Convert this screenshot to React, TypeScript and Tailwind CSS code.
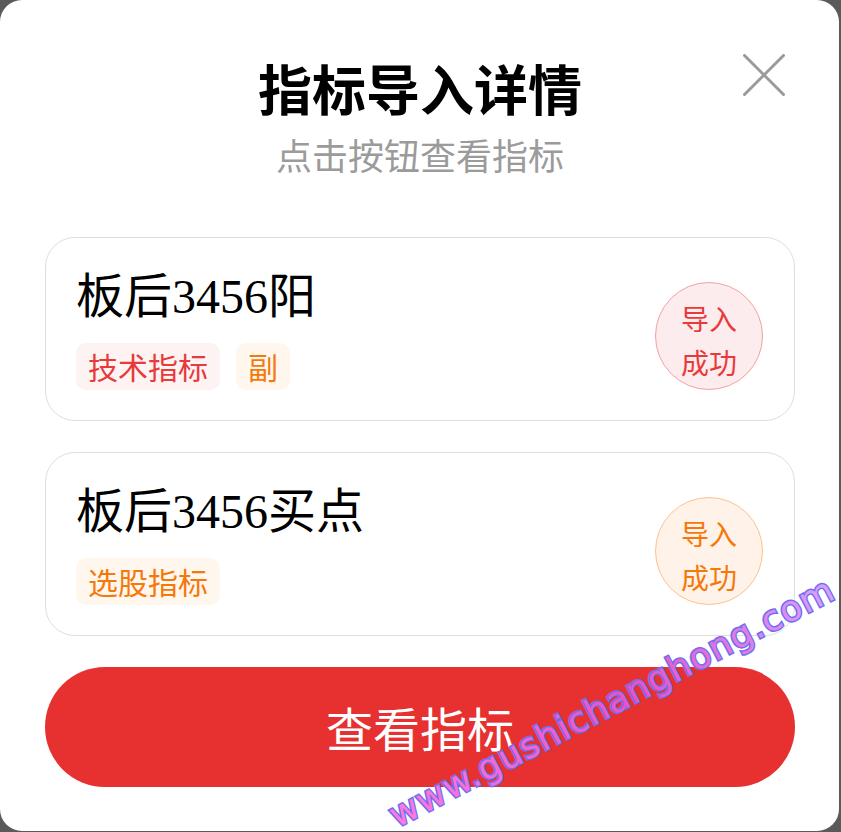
import React from "react";

type Tone = "red" | "orange";

interface Indicator {
  name: string;
  tags: { label: string; tone: Tone }[];
  tone: Tone;
}

const indicators: Indicator[] = [
  {
    name: "板后3456阳",
    tags: [
      { label: "技术指标", tone: "red" },
      { label: "副", tone: "orange" },
    ],
    tone: "red",
  },
  {
    name: "板后3456买点",
    tags: [{ label: "选股指标", tone: "orange" }],
    tone: "orange",
  },
];

const tagStyles: Record<Tone, string> = {
  red: "bg-[#fdf3f3] text-[#e8393b]",
  orange: "bg-[#fff6ee] text-[#f5780a]",
};

const badgeStyles: Record<Tone, string> = {
  red: "bg-[#fdeced] border-[#f3a0a2] text-[#e8393b]",
  orange: "bg-[#fff2e8] border-[#fcc28f] text-[#f5780a]",
};

function IndicatorCard({ item }: { item: Indicator }) {
  return (
    <div className="flex items-end justify-between rounded-[30px] border border-[#dedede] bg-white pl-[30px] pr-[31px] pt-[35px] pb-[30px]">
      <div className="flex flex-col">
        <div className="text-[48px] leading-[48px] text-black [font-family:'Liberation_Serif','Noto_Sans_CJK_SC',serif]">
          {item.name}
        </div>
        <div className="mt-[22px] flex gap-4">
          {item.tags.map((t) => (
            <span
              key={t.label}
              className={`flex h-[47px] items-center rounded-[10px] px-[12px] text-[30px] ${tagStyles[t.tone]}`}
            >
              {t.label}
            </span>
          ))}
        </div>
      </div>
      <div
        className={`flex h-[108px] w-[108px] flex-col items-center justify-center rounded-full border pt-[8px] text-[28px] leading-[44px] ${badgeStyles[item.tone]}`}
      >
        <span>导入</span>
        <span>成功</span>
      </div>
    </div>
  );
}

export default function App() {
  return (
    <div className="h-[832px] w-[841px] overflow-hidden bg-[#5a5a5a] [font-family:'Noto_Sans_CJK_SC','Noto_Sans',sans-serif]">
      <div className="relative h-[831px] w-[839px] overflow-hidden rounded-[22px] bg-white pl-[45px] pr-[44px]">
        {/* close button */}
        <button className="absolute left-[743px] top-[54px] h-[42px] w-[42px]" aria-label="关闭">
          <svg viewBox="0 0 42 42" className="h-full w-full" fill="none" stroke="#9a9a9a" strokeWidth="3" strokeLinecap="round">
            <path d="M1.5 1.5 L40.5 40.5 M40.5 1.5 L1.5 40.5" />
          </svg>
        </button>

        <div className="flex flex-col items-center pt-[61px]">
          <h1 className="text-[54px] font-bold leading-[54px] text-black">指标导入详情</h1>
          <p className="mt-[21px] text-[36px] leading-[36px] text-[#9b9b9b]">点击按钮查看指标</p>
        </div>

        <div className="mt-[65px] flex flex-col gap-[31px]">
          {indicators.map((it) => (
            <IndicatorCard key={it.name} item={it} />
          ))}
        </div>

        <button className="mt-[31px] flex h-[120px] w-full items-center justify-center rounded-full bg-[#e73131] text-[47px] text-white">
          查看指标
        </button>

        {/* site watermark */}
        <svg className="pointer-events-none absolute inset-0" width="839" height="831">
          <defs>
            <linearGradient id="wm" x1="0" y1="0" x2="1" y2="0">
              <stop offset="0" stopColor="#ff7ae0" />
              <stop offset="0.55" stopColor="#ec4fc4" />
              <stop offset="1" stopColor="#d7a2ff" />
            </linearGradient>
          </defs>
          <text
            x="397"
            y="828"
            transform="rotate(-27.6 397 828)"
            fontFamily="DejaVu Sans, sans-serif"
            fontSize="35"
            textLength="496"
            lengthAdjust="spacing"
            fill="url(#wm)"
            stroke="#6d6ff2"
            strokeWidth="3"
            style={{ paintOrder: "stroke" }}
          >
            www.gushichanghong.com
          </text>
        </svg>
      </div>
    </div>
  );
}
